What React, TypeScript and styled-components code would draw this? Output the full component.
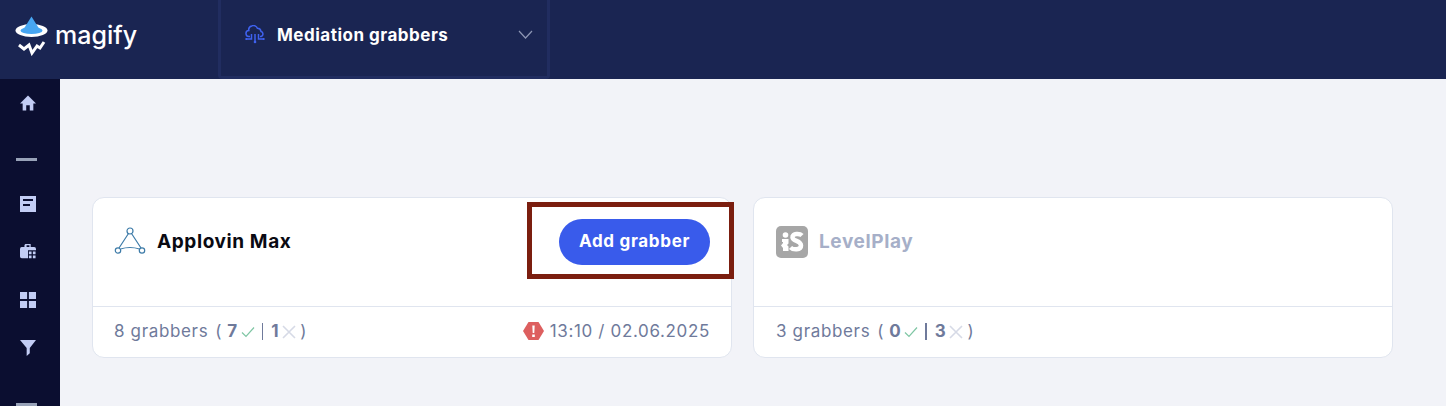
import React from "react";
import styled, { createGlobalStyle } from "styled-components";

const GlobalStyle = createGlobalStyle`
  html, body {
    margin: 0;
    height: 100%;
    overflow: hidden;
    background: #f2f3f8;
    font-family: Inter, "Noto Sans", sans-serif;
  }
`;

const Page = styled.div`
  width: 1446px;
  height: 406px;
  overflow: hidden;
  display: flex;
  flex-direction: column;
`;

const Header = styled.header`
  height: 79px;
  flex: none;
  display: flex;
  background: #1a2552;
`;

const LogoArea = styled.div`
  width: 218px;
  box-sizing: border-box;
  padding: 0 0 7px 15px;
  display: flex;
  align-items: center;
  gap: 6px;
`;

const LogoText = styled.span`
  color: #fff;
  font-size: 25px;
  font-weight: 500;
  line-height: 1;
  padding-bottom: 2px;
`;

const ProjectSelect = styled.div`
  width: 332px;
  box-sizing: border-box;
  border: solid #212d60;
  border-width: 0 3px 3px 3px;
  border-radius: 0 0 4px 4px;
  padding: 0 14px 7px 24px;
  display: flex;
  align-items: center;
`;

const ProjectName = styled.span`
  margin-left: 12px;
  color: #fff;
  font-size: 17px;
  font-weight: 700;
  letter-spacing: 0.5px;
  flex: 1;
`;

const Body = styled.div`
  flex: 1;
  display: flex;
  min-height: 0;
`;

const Sidebar = styled.nav`
  width: 60px;
  flex: none;
  background: #0b0e30;
  display: flex;
  flex-direction: column;
  align-items: center;
  padding-top: 16px;
  box-sizing: border-box;
`;

const NavIcon = styled.div`
  width: 16px;
  height: 16px;
  margin-left: -4px;
  margin-bottom: 32px;
  display: flex;
`;

const NavDash = styled.div<{ $after: number }>`
  width: 21px;
  height: 3px;
  flex: none;
  margin-left: -7px;
  margin-top: 15px;
  margin-bottom: ${(p) => p.$after}px;
  background: #98a2b8;
`;

const Main = styled.main`
  flex: 1;
  padding: 118px 53px 0 32px;
  box-sizing: border-box;
`;

const Cards = styled.div`
  display: grid;
  grid-template-columns: 640px 640px;
  gap: 21px;
`;

const Card = styled.section`
  height: 161px;
  box-sizing: border-box;
  background: #fff;
  border: 1px solid #e0e5ef;
  border-radius: 12px;
  display: flex;
  flex-direction: column;
`;

const CardTop = styled.div<{ $inset: number }>`
  height: 109px;
  flex: none;
  box-sizing: border-box;
  border-bottom: 1px solid #e0e5ef;
  padding: 21px 21px 0 ${(p) => p.$inset}px;
  display: flex;
  align-items: flex-start;
  justify-content: space-between;
`;

const Provider = styled.div`
  height: 44px;
  display: flex;
  align-items: center;
  gap: 11px;
`;

const ProviderName = styled.h3<{ $muted?: boolean }>`
  margin: 0;
  color: ${(p) => (p.$muted ? "#a6afc8" : "#0a0a12")};
  font-size: 19px;
  font-weight: 700;
  letter-spacing: 0.6px;
`;

const ButtonWrap = styled.div`
  position: relative;
`;

const AddButton = styled.button`
  width: 151px;
  height: 46px;
  padding: 0 0 2px;
  border: 0;
  border-radius: 23px;
  background: #395beb;
  color: #fff;
  font: 700 17px Inter, "Noto Sans", sans-serif;
  letter-spacing: 0.7px;
`;

const Highlight = styled.div`
  position: absolute;
  left: -32px;
  top: -17px;
  width: 207px;
  height: 77px;
  box-sizing: border-box;
  border: 5px solid #7b1e0f;
  pointer-events: none;
`;

const CardFooter = styled.div<{ $inset: number }>`
  flex: 1;
  padding: 0 21px 2px ${(p) => p.$inset}px;
  display: flex;
  align-items: center;
  justify-content: space-between;
  color: #6f7a9b;
  font-size: 17px;
  letter-spacing: 0.65px;
`;

const Stats = styled.div`
  display: flex;
  align-items: center;
`;

const Count = styled.b`
  font-weight: 700;
  margin-left: 5px;
`;

const Paren = styled.span<{ $gap: number }>`
  margin-left: ${(p) => p.$gap}px;
`;

const Sep = styled.i`
  width: 1.5px;
  height: 17px;
  margin: 0 3px 0 7px;
  background: #6f7a9b;
`;

const Stamp = styled.div`
  display: flex;
  align-items: center;
  gap: 6px;
`;

const Check = () => (
  <svg width="14" height="12" viewBox="0 0 14 12" style={{ margin: "1px 0 0 3px" }}>
    <path d="M1 6.500 5 10.500 13 1.500" fill="none" stroke="#7fc6a4" strokeWidth="1.2" />
  </svg>
);

const Cross = () => (
  <svg width="14" height="14" viewBox="0 0 14 14" style={{ margin: "1px 0 0 3px" }}>
    <path d="M1 1 13 13M13 1 1 13" fill="none" stroke="#d6dae6" strokeWidth="1.6" />
  </svg>
);

const ChevronDown = () => (
  <svg width="15" height="9" viewBox="0 0 15 9">
    <path d="M1 1 7.500 8 14 1" fill="none" stroke="#8d96b4" strokeWidth="1.2" />
  </svg>
);

const LogoMark = () => (
  <svg width="34" height="40" viewBox="0 0 34 40">
    <ellipse cx="16.500" cy="14.500" rx="16" ry="6.500" fill="#fff" />
    <ellipse cx="16.500" cy="14.500" rx="11" ry="3.600" fill="#47a6f2" />
    <path d="M16.500 0.500 24 12.500 9 12.500Z" fill="#47a6f2" />
    <path d="M4 29 9 33 14 29 17 37 22 30 25 32 29 26" fill="none" stroke="#fff" strokeWidth="3" />
  </svg>
);

const CloudIcon = () => (
  <svg width="20" height="19" viewBox="0 0 20 19" fill="none" stroke="#3f62f0" strokeWidth="1.5">
    <path d="M5 11.500H4.200a3 3 0 0 1-.4-6 4 4 0 0 1 3-4.600 4.200 4.200 0 0 1 5.600 2.400 3.600 3.600 0 0 1 3.600 3.200 2.600 2.600 0 0 1 .2 5H15" />
    <path d="M10 9v8M6.500 9v5H1M13.500 9v5H19" />
    <circle cx="10" cy="17" r="1.300" fill="#3f62f0" stroke="none" />
    <circle cx="1.300" cy="14" r="1.100" fill="#3f62f0" stroke="none" />
    <circle cx="18.700" cy="14" r="1.100" fill="#3f62f0" stroke="none" />
  </svg>
);

const HomeIcon = () => (
  <svg width="16" height="16" viewBox="0 0 18 18" fill="#c3cdf5">
    <path d="M9 0.500 18 9.500 15 9.500V17.500H11V11.500H7V17.500H3V9.500H0Z" />
  </svg>
);

const ArticleIcon = () => (
  <svg width="16" height="16" viewBox="0 0 16 16">
    <path fill="#c3cdf5" d="M0 0h16v16H0z" />
    <path fill="#0b0e30" d="M3 3h10v2H3zM3 8h7v2H3z" />
  </svg>
);

const CaseIcon = () => (
  <svg width="16" height="16" viewBox="0 0 18 18" fill="#c3cdf5">
    <path d="M6 0h6v3.500h4a2 2 0 0 1 2 2V7h-9v9H2a2 2 0 0 1-2-2V5.500a2 2 0 0 1 2-2h3V1zm1.400 1.500v2h3.200v-2z" />
    <path d="M10 8.500h3v3h-3zM14.500 8.500h3v3h-3zM10 13h3v3h-3zM14.500 13h3v3h-3z" />
  </svg>
);

const GridIcon = () => (
  <svg width="16" height="16" viewBox="0 0 18 18" fill="#c3cdf5">
    <path d="M0 0h8v8H0zM10 0h8v8h-8zM0 10h8v8H0zM10 10h8v8h-8z" />
  </svg>
);

const FilterIcon = () => (
  <svg width="16" height="16" viewBox="0 0 18 18" fill="#c3cdf5">
    <path d="M0 0h18l-7 9v6l-3.500 3V9Z" />
  </svg>
);

const ApplovinIcon = () => (
  <svg width="32" height="28" viewBox="0 0 32 28" fill="none" stroke="#3d7ba8" strokeWidth="1.2">
    <circle cx="16" cy="4" r="3" />
    <circle cx="4" cy="23.500" r="2.700" />
    <circle cx="28" cy="23.500" r="2.700" />
    <path d="M14.500 6.500 5 21M17.500 6.500 27 21M6.500 22Q16 19 25.500 22" />
  </svg>
);

const IronSourceIcon = () => (
  <svg width="32" height="32" viewBox="0 0 32 32" style={{ marginTop: 2 }}>
    <rect width="32" height="32" rx="5" fill="#a6a6a6" />
    <circle cx="9.500" cy="9" r="2.800" fill="#fff" />
    <path fill="#fff" d="M6 13h6.500v4.500l-1.500 1.500 1.500 1.500V25H7v-3l-2-2.500 2-2.500v-1H6z" />
    <path
      fill="none"
      stroke="#fff"
      strokeWidth="4.500"
      d="M26 9.500C24 7.500 16 7 16.500 11.500 17 15.500 25 14.500 25 19.500 25 24.500 17 24 14.500 21.500"
    />
  </svg>
);

const AlertIcon = () => (
  <svg width="21" height="18" viewBox="0 0 21 18">
    <path fill="#dd5f5f" d="M5.500 0h10L21 9l-5.500 9h-10L0 9z" />
    <path fill="#fff" d="M9.300 3.500h2.400L11.300 11H9.700zM9.200 12.500h2.600V15H9.200z" />
  </svg>
);

export default function App() {
  return (
    <Page>
      <GlobalStyle />
      <Header>
        <LogoArea>
          <LogoMark />
          <LogoText>magify</LogoText>
        </LogoArea>
        <ProjectSelect>
          <CloudIcon />
          <ProjectName>Mediation grabbers</ProjectName>
          <ChevronDown />
        </ProjectSelect>
      </Header>
      <Body>
        <Sidebar>
          <NavIcon>
            <HomeIcon />
          </NavIcon>
          <NavDash $after={35} />
          <NavIcon>
            <ArticleIcon />
          </NavIcon>
          <NavIcon>
            <CaseIcon />
          </NavIcon>
          <NavIcon>
            <GridIcon />
          </NavIcon>
          <NavIcon>
            <FilterIcon />
          </NavIcon>
          <NavDash $after={0} />
        </Sidebar>
        <Main>
          <Cards>
            <Card>
              <CardTop $inset={21}>
                <Provider>
                  <ApplovinIcon />
                  <ProviderName>Applovin Max</ProviderName>
                </Provider>
                <ButtonWrap>
                  <AddButton>Add grabber</AddButton>
                  <Highlight />
                </ButtonWrap>
              </CardTop>
              <CardFooter $inset={21}>
                <Stats>
                  8 grabbers<Paren $gap={7}>(</Paren>
                  <Count>7</Count>
                  <Check />
                  <Sep />
                  <Count>1</Count>
                  <Cross />
                  <Paren $gap={4}>)</Paren>
                </Stats>
                <Stamp>
                  <AlertIcon />
                  13:10 / 02.06.2025
                </Stamp>
              </CardFooter>
            </Card>
            <Card>
              <CardTop $inset={22}>
                <Provider>
                  <IronSourceIcon />
                  <ProviderName $muted>LevelPlay</ProviderName>
                </Provider>
              </CardTop>
              <CardFooter $inset={22}>
                <Stats>
                  3 grabbers<Paren $gap={7}>(</Paren>
                  <Count>0</Count>
                  <Check />
                  <Sep />
                  <Count>3</Count>
                  <Cross />
                  <Paren $gap={4}>)</Paren>
                </Stats>
              </CardFooter>
            </Card>
          </Cards>
        </Main>
      </Body>
    </Page>
  );
}
